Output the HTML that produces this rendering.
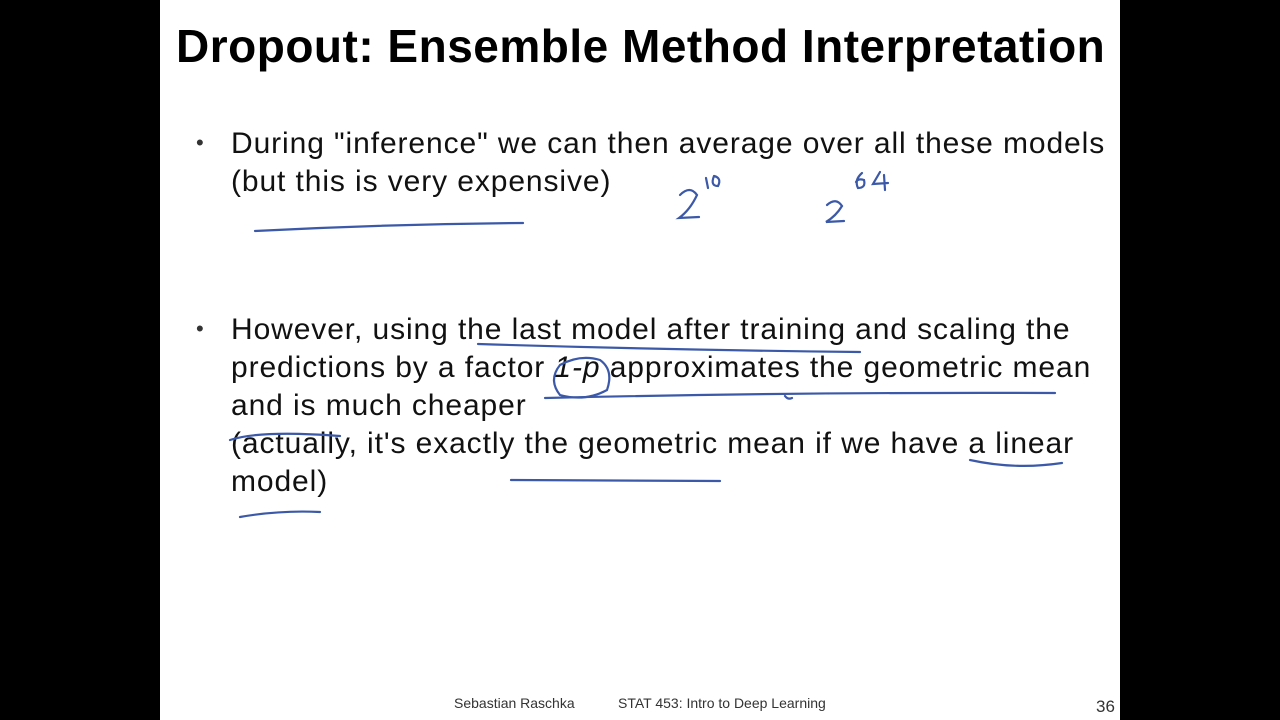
<!DOCTYPE html>
<html><head><meta charset="utf-8"><style>
body{margin:0;width:1280px;height:720px;background:#000;overflow:hidden;font-family:"Liberation Sans",Arial,sans-serif;}
.slide{position:absolute;left:160px;top:0;width:960px;height:720px;background:#fff;}
.t{position:absolute;white-space:nowrap;color:#111;}
h1{position:absolute;left:16px;top:19px;margin:0;font-size:46px;font-weight:bold;letter-spacing:0.5px;color:#000;white-space:nowrap;}
.b{font-size:30px;line-height:38px;letter-spacing:0.9px;}
.dot{position:absolute;font-size:22px;color:#333;}
.f{position:absolute;font-size:14px;color:#333;top:695px;}
</style></head><body>
<div class="slide">
<h1>Dropout: Ensemble Method Interpretation</h1>
<div class="dot" style="left:36px;top:130px">•</div>
<div class="t b" style="left:71px;top:125px">During "inference" we can then average over all these models<br>(but this is very expensive)</div>
<div class="dot" style="left:36px;top:316px">•</div>
<div class="t b" style="left:71px;top:311px">However, using the last model after training and scaling the<br>predictions by a factor <i>1-p</i> approximates the geometric mean<br>and is much cheaper<br>(actually, it's exactly the geometric mean if we have a linear<br>model)</div>
<div class="f" style="left:294px">Sebastian Raschka</div>
<div class="f" style="left:458px">STAT 453: Intro to Deep Learning</div>
<div class="f" style="left:936px;font-size:17px;top:697px">36</div>
</div>
<svg width="1280" height="720" style="position:absolute;left:0;top:0" fill="none" stroke="#3b59a8" stroke-width="2.2" stroke-linecap="round">
<path d="M255 231 Q390 224 523 223"/>
<path d="M680 195 Q690 185 697 195 Q690 210 679 218 L699 217"/>
<path d="M706 178 L708 188 M714 176 Q722 178 718 186 Q710 186 714 176"/>
<path d="M827 205 Q836 197 842 206 Q836 216 826 222 L844 221"/>
<path d="M862 173 Q854 180 858 188 Q866 188 864 180 Q858 178 856 182 M880 172 L873 184 L888 183 M884 175 L885 190"/>
<path d="M478 344 Q670 350 860 352"/>
<path d="M560 365 Q548 380 560 395 Q585 402 607 390 Q614 370 600 360 Q580 354 560 365"/>
<path d="M545 398 Q800 392 1055 393 M785 396 Q788 400 792 398"/>
<path d="M230 440 Q260 430 340 436"/>
<path d="M511 480 L720 481"/>
<path d="M970 460 Q1015 470 1062 463"/>
<path d="M240 517 Q280 510 320 512"/>
</svg>
</body></html>
